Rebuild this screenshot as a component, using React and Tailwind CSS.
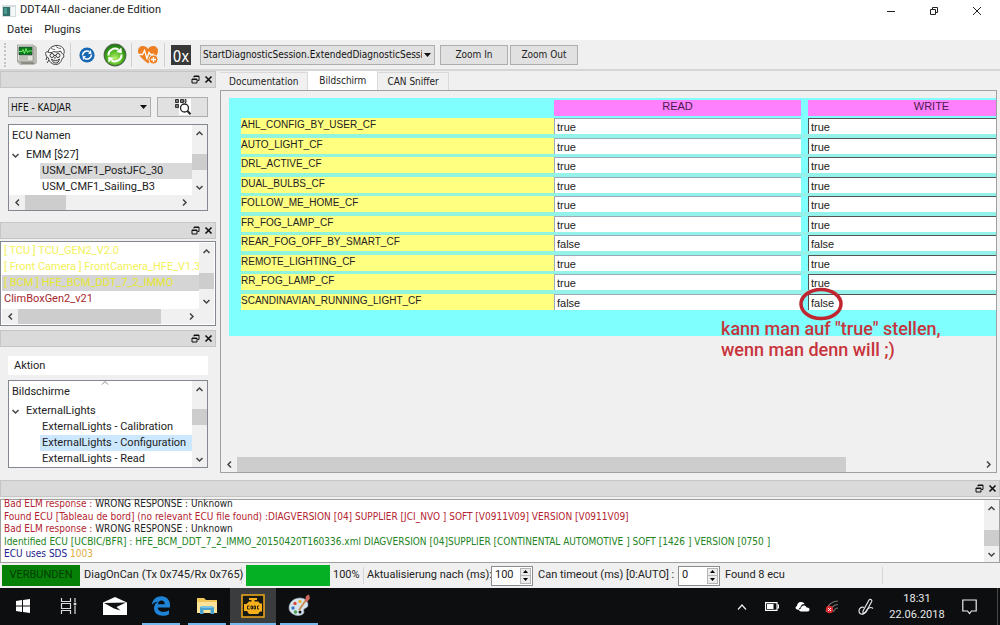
import { useState } from "react";
import clsx from "clsx";

const PARAMS = [
  { name: "AHL_CONFIG_BY_USER_CF", value: "true" },
  { name: "AUTO_LIGHT_CF", value: "true" },
  { name: "DRL_ACTIVE_CF", value: "true" },
  { name: "DUAL_BULBS_CF", value: "true" },
  { name: "FOLLOW_ME_HOME_CF", value: "true" },
  { name: "FR_FOG_LAMP_CF", value: "true" },
  { name: "REAR_FOG_OFF_BY_SMART_CF", value: "false" },
  { name: "REMOTE_LIGHTING_CF", value: "true" },
  { name: "RR_FOG_LAMP_CF", value: "true" },
  { name: "SCANDINAVIAN_RUNNING_LIGHT_CF", value: "false" },
];

const TABS = ["Documentation", "Bildschirm", "CAN Sniffer"];

const chevrons = {
  up: "M1.5 6 4.5 3l3 3",
  down: "M1.5 3l3 3 3-3",
  left: "M6 1.5l-3 3 3 3",
  right: "M3 1.5l3 3-3 3",
};

const Chevron = ({ dir, className }) => (
  <svg viewBox="0 0 9 9" className={clsx("size-[9px] shrink-0", className)} fill="none" stroke="#444" strokeWidth="1.5">
    <path d={chevrons[dir]} />
  </svg>
);

const VScroll = ({ thumb }) => (
  <div className="flex w-[15px] shrink-0 flex-col bg-[#f0f0f0]">
    <button aria-label="Nach oben" className="flex h-4 items-center justify-center">
      <Chevron dir="up" />
    </button>
    <div className="flex-1">
      <div className={clsx("bg-[#cdcdcd]", thumb)} />
    </div>
    <button aria-label="Nach unten" className="flex h-4 items-center justify-center">
      <Chevron dir="down" />
    </button>
  </div>
);

const HScroll = ({ thumb }) => (
  <div className="flex h-[15px] shrink-0 bg-[#f0f0f0]">
    <button aria-label="Nach links" className="flex w-4 items-center justify-center">
      <Chevron dir="left" />
    </button>
    <div className="flex flex-1">
      <div className={clsx("bg-[#cdcdcd]", thumb)} />
    </div>
    <button aria-label="Nach rechts" className="flex w-4 items-center justify-center">
      <Chevron dir="right" />
    </button>
  </div>
);

const DockTitle = () => (
  <div className="flex h-[17px] shrink-0 items-center justify-end gap-1 border border-[#c6c6c6] bg-[#dadada] pr-[2px]">
    <button aria-label="Abdocken">
      <svg viewBox="0 0 9 9" className="size-[9px]" fill="none" stroke="#111">
        <path d="M3 2.5V1h5v4.5H6.5M3 1.5h5" />
        <path d="M1 4h5v4H1zM1 4.5h5" />
      </svg>
    </button>
    <button aria-label="Schließen">
      <svg viewBox="0 0 9 9" className="size-[9px]" fill="none" stroke="#111" strokeWidth="1.6">
        <path d="M1.5 1.5l6 6M7.5 1.5l-6 6" />
      </svg>
    </button>
  </div>
);

const Select = ({ label, value, className }) => (
  <div className={clsx("relative flex h-5", className)}>
    <select
      aria-label={label}
      className="w-full appearance-none border border-[#adadad] bg-[#e1e1e1] pr-3 pl-[2px] font-['DejaVu_Sans_Condensed'] text-[10px] text-[#111]"
    >
      <option>{value}</option>
    </select>
    <svg viewBox="0 0 7 4" className="pointer-events-none absolute top-2 right-1 h-1 w-[7px]">
      <path d="M0 0h7L3.5 4z" fill="#111" />
    </svg>
  </div>
);

const SpinBox = ({ id, value }) => (
  <div className="flex h-5 w-[42px] border border-[#8c8c8c] bg-white">
    <input id={id} defaultValue={value} className="w-0 flex-1 px-[3px] outline-none" />
    <div className="m-px flex w-[11px] flex-col border border-[#b5b5b5] bg-[#ececec]">
      <button aria-label="Erhöhen" className="flex flex-1 items-center justify-center border-b border-[#b5b5b5]">
        <svg viewBox="0 0 5 3" className="h-[3px] w-[5px]">
          <path d="M0 3h5L2.5 0z" />
        </svg>
      </button>
      <button aria-label="Verringern" className="flex flex-1 items-center justify-center">
        <svg viewBox="0 0 5 3" className="h-[3px] w-[5px]">
          <path d="M0 0h5L2.5 3z" />
        </svg>
      </button>
    </div>
  </div>
);

const Tree = ({ header, parent, items, selected, selectedClass, sortMark, thumb, hThumb }) => (
  <div className="border border-[#828790] bg-white">
    <div className="flex">
      <div className="min-w-0 flex-1 text-[11px] leading-4">
        <div className="relative flex h-[22px] items-center pl-[3px]">
          {header}
          {sortMark && (
            <svg viewBox="0 0 8 4" className="absolute top-0 left-1/2 h-1 w-2" fill="none" stroke="#888">
              <path d="M1 3.5l3-3 3 3" />
            </svg>
          )}
        </div>
        <div className="flex h-4 items-center gap-[6px] pl-[2px]">
          <Chevron dir="down" />
          {parent}
        </div>
        <ul>
          {items.map((item) => (
            <li key={item} className={clsx("ml-[31px] h-4 pl-[2px] whitespace-nowrap", item === selected && selectedClass)}>
              {item}
            </li>
          ))}
        </ul>
      </div>
      <VScroll thumb={thumb} />
    </div>
    {hThumb && (
      <div className="bg-[#f0f0f0] pr-[15px]">
        <HScroll thumb={hThumb} />
      </div>
    )}
  </div>
);

const TitleBar = () => (
  <header className="bg-white text-[11px] text-[#222]">
    <div className="flex h-[21px] items-center">
      <svg viewBox="0 0 14 12" className="ml-[2px] h-3 w-[14px]">
        <path d="M0 0h14v12H0z" fill="#d5dcdc" />
        <path d="M1 2h7v9H1z" fill="#2f6f6c" />
        <path d="M2 3h3v6H2z" fill="#4a9a8a" />
        <path d="M9 2h4v9H9z" fill="#f4f7f7" />
      </svg>
      <h1 className="ml-1">DDT4All - dacianer.de Edition</h1>
      <div className="ml-auto flex pr-[2px]">
        <button aria-label="Minimieren" className="flex w-[43px] justify-center">
          <svg viewBox="0 0 10 10" className="size-[10px]" stroke="#222">
            <path d="M1 5.500h8" />
          </svg>
        </button>
        <button aria-label="Wiederherstellen" className="flex w-[43px] justify-center">
          <svg viewBox="0 0 10 10" className="size-[10px]" fill="none" stroke="#222">
            <path d="M1.500 3.500h5v5h-5zM3.500 3V1.500h5v5H7" />
          </svg>
        </button>
        <button aria-label="Schließen" className="flex w-[43px] justify-center">
          <svg viewBox="0 0 10 10" className="size-[10px]" stroke="#222">
            <path d="M1 1l8 8M9 1L1 9" />
          </svg>
        </button>
      </div>
    </div>
    <nav className="flex h-[19px] items-center gap-3 pl-[7px]">
      <button>Datei</button>
      <button>Plugins</button>
    </nav>
  </header>
);

const ToolSeparator = () => <div className="h-6 w-px bg-[#d0d0d0]" />;

const Toolbar = () => (
  <div className="flex h-[31px] items-center border-b-2 border-[#d6d6d6] pl-1">
    <div className="h-6 border-l-2 border-dotted border-[#c4c4c4]" />
    <button aria-label="Diagnose" className="ml-[10px]">
      <svg viewBox="0 0 22 22" className="size-[22px]">
        <path d="M3 1h15l3 2v16l-3 2H4l-3-3V3z" fill="#b9bab2" />
        <path d="M1.500 1h15.500v16H1.500z" fill="#e3e4dc" stroke="#8b8c85" strokeWidth=".7" />
        <path d="M3 3h13v8H3z" fill="#0e7a1e" stroke="#234" strokeWidth=".6" />
        <path d="M3 7.500h3l1-2 1.500 4 1.500-5 1.500 4 1-1.500h3.500" fill="none" stroke="#7dff70" strokeWidth=".9" />
        <path d="M3 13h9M3 15h9" stroke="#9a9b93" />
        <path d="M4 18h13l2 2H6z" fill="#8b8c85" />
      </svg>
    </button>
    <button aria-label="Experte" className="ml-[6px]">
      <svg viewBox="0 0 22 22" className="size-[22px]" fill="none" stroke="#3c3c3c" strokeWidth="1">
        <path d="M4 8c-2-1-3 1-2 3 0 2 2 2 2.500 3 .5 4 4 6.500 7 6.500 4 0 6-3 6.500-6 1.500-.5 2.500-2 1.500-4" fill="#f7f7f7" />
        <path d="M4 8c1-4 4-6 8-6.500 3-.4 7 1 8 4.500.5 2 0 3.500-.5 4.500-1.500-.5-2-2-3-3.500-2 1.500-5 1-7 .5C8 9 6 9 4 8z" fill="#fff" />
        <path d="M7 4c1 1 2 1.500 4 1.500M12 2.500c1 1 3 2 5 2" strokeWidth=".8" />
        <path d="M6 11.500a2 2 0 1 0 4 0 2 2 0 1 0-4 0zM12 11.500a2 2 0 1 0 4 0 2 2 0 1 0-4 0zM10 11.500h2" />
        <path d="M7.500 15c2 2 6 2 8 0-.5 3-2 4-4 4s-3.500-2-4-4z" fill="#ddd" />
        <path d="M10 13.500l1 .8 1-.8M5 16l-2 3M3 13l-1 3" />
      </svg>
    </button>
    <div className="ml-1 flex">
      <ToolSeparator />
    </div>
    <button aria-label="Aktualisieren" className="ml-2">
      <svg viewBox="0 0 16 16" className="size-4">
        <circle cx="8" cy="8" r="7.600" fill="#1668b5" />
        <path d="M3.500 8.500A4.500 4.500 0 0 1 10.500 4.700M12.500 7.500A4.500 4.500 0 0 1 5.500 11.300" fill="none" stroke="#fff" strokeWidth="1.500" />
        <path d="M9 6.700l3.500.3-.6-4zM7 9.300L3.500 9l.6 4z" fill="#fff" />
      </svg>
    </button>
    <button aria-label="Neu laden" className="ml-2">
      <svg viewBox="0 0 24 24" className="size-6">
        <defs>
          <radialGradient id="green" cx=".5" cy=".65" r=".6">
            <stop offset="0" stopColor="#b8f06a" />
            <stop offset=".6" stopColor="#4cb51e" />
            <stop offset="1" stopColor="#1c7a10" />
          </radialGradient>
        </defs>
        <circle cx="12" cy="12" r="10.800" fill="url(#green)" stroke="#4b6b45" strokeWidth="1.200" />
        <path d="M5.500 12.500a6.500 6.500 0 0 1 10-5.800M18.500 11.500a6.500 6.500 0 0 1-10 5.800" fill="none" stroke="#fff" strokeWidth="2" />
        <path d="M18.500 4.500l.3 5.800-5.600-1.300zM5.500 19.500l-.3-5.800 5.600 1.300z" fill="#fff" />
      </svg>
    </button>
    <div className="ml-1 flex">
      <ToolSeparator />
    </div>
    <button aria-label="Live-Werte" className="ml-[5px]">
      <svg viewBox="0 0 22 20" className="h-5 w-[22px]">
        <path d="M11 18.500C5 13.500 1 10 1 6c0-3 2-5 5-5 2 0 4 1 5 3 1-2 3-3 5-3 3 0 5 2 5 5 0 4-4 7.500-10 12.500z" fill="#ee7f22" />
        <path d="M1 9.500h4.500l2-4 2.500 8 2-6 1.500 2H17" fill="none" stroke="#fff" strokeWidth="1.300" />
        <circle cx="16.500" cy="14.500" r="4.500" fill="#ee7f22" stroke="#f5f0ea" />
        <path d="M14 14.500h5M16.500 12v5" stroke="#fff" strokeWidth="1.300" />
      </svg>
    </button>
    <div className="ml-[5px] flex">
      <ToolSeparator />
    </div>
    <button
      aria-label="Hexadezimal"
      className="ml-[6px] flex size-5 items-center justify-center overflow-hidden bg-[#383838] pt-1 font-['DejaVu_Sans_Condensed'] text-[15px] leading-4 text-white"
    >
      0x
    </button>
    <Select
      label="Diagnosesitzung"
      value="StartDiagnosticSession.ExtendedDiagnosticSession"
      className="ml-[9px] w-[235px]"
    />
    <div className="ml-[5px] flex gap-[2px] font-['DejaVu_Sans_Condensed'] text-[10px]">
      <button className="h-5 w-[68px] border border-[#adadad] bg-[#e1e1e1]">Zoom In</button>
      <button className="h-5 w-[68px] border border-[#adadad] bg-[#e1e1e1]">Zoom Out</button>
    </div>
  </div>
);

const ECUS = [
  { name: "[ TCU ] TCU_GEN2_V2.0", className: "text-[#f2f25a]" },
  { name: "[ Front Camera ] FrontCamera_HFE_V1.3", className: "text-[#f2f25a]" },
  { name: "[ BCM ] HFE_BCM_DDT_7_2_IMMO", className: "bg-[#d5d5d5] text-[#e6e62e]" },
  { name: "ClimBoxGen2_v21", className: "text-[#a8282e]" },
];

const Sidebar = () => (
  <aside className="flex w-[216px] shrink-0 flex-col">
    <DockTitle />
    <div className="flex flex-col gap-[7px] px-2 pt-[9px] pb-[11px]">
      <div className="flex items-center gap-[6px]">
        <Select label="Fahrzeug" value="HFE - KADJAR" className="w-[143px]" />
        <button aria-label="ECU suchen" className="flex h-5 flex-1 items-center justify-center border border-[#adadad] bg-[#e1e1e1]">
          <svg viewBox="0 0 16 16" className="size-4" fill="none">
            <path d="M4 0h12v16H4z" fill="#fff" />
            <path d="M.5.500h3v3h-3zM5.500.500h3v3h-3zM.5 5.500h3v3h-3z" fill="#777" stroke="#333" />
            <path d="M10 .5h1v3h-1z" stroke="#333" />
            <circle cx="9.500" cy="9" r="4" stroke="#222" strokeWidth="1.300" />
            <path d="M12.500 12l3 3.200" stroke="#222" strokeWidth="2" />
          </svg>
        </button>
      </div>
      <Tree
        header="ECU Namen"
        parent="EMM [$27]"
        items={["USM_CMF1_PostJFC_30", "USM_CMF1_Sailing_B3"]}
        selected="USM_CMF1_PostJFC_30"
        selectedClass="bg-[#d9d9d9]"
        thumb="mt-[13px] h-4"
        hThumb="w-[41px]"
      />
    </div>

    <DockTitle />
    <div className="mt-[2px] mb-1 border border-[#828790] bg-white p-px">
      <div className="flex">
        <ul className="min-w-0 flex-1 overflow-hidden pb-[2px] text-[11px] leading-4">
          {ECUS.map((ecu) => (
            <li key={ecu.name} className={clsx("h-4 pl-[2px] whitespace-nowrap", ecu.className)}>
              {ecu.name}
            </li>
          ))}
        </ul>
        <VScroll thumb="mt-[14px] h-4" />
      </div>
      <div className="bg-[#f0f0f0] pr-[15px]">
        <HScroll thumb="w-[143px]" />
      </div>
    </div>

    <DockTitle />
    <div className="flex flex-col gap-[5px] px-2 pt-[9px]">
      <div className="h-[19px] bg-white pl-[6px] text-[11px] leading-[19px]">Aktion</div>
      <Tree
        header="Bildschirme"
        parent="ExternalLights"
        items={[
          "ExternalLights - Calibration",
          "ExternalLights - Configuration",
          "ExternalLights - Read",
        ]}
        selected="ExternalLights - Configuration"
        selectedClass="bg-[#cce8ff]"
        sortMark
        thumb="mt-[12px] h-4"
      />
    </div>
  </aside>
);

const ParamTable = () => (
  <table className="w-[814px] table-fixed border-collapse text-[11px] leading-[13px] text-[#222]">
    <colgroup>
      <col className="w-[313px]" />
      <col className="w-[254px]" />
      <col className="w-[247px]" />
    </colgroup>
    <thead>
      <tr className="h-[18px] align-top text-[#4a1a4a]">
        <td />
        <th className="pr-[7px] font-normal">
          <div className="h-4 bg-[#ff80ff]">READ</div>
        </th>
        <th className="font-normal">
          <div className="h-4 bg-[#ff80ff]">WRITE</div>
        </th>
      </tr>
    </thead>
    <tbody>
      {PARAMS.map(({ name, value }) => (
        <tr key={name} className="group align-top odd:h-5 even:h-[19px]">
          <th className="bg-[#90f5dc] text-left text-[10px] font-normal group-last:bg-transparent">
            <label htmlFor={name} className="block h-4 bg-[#ffff80]">
              {name}
            </label>
          </th>
          <td className="bg-[#94f2ea] group-last:bg-transparent">
            <div className="border-r-[7px] border-[#80ffff]">
              <input
                aria-label={`${name} READ`}
                readOnly
                value={value}
                className="block h-4 w-full border-t border-l border-[#9ab] bg-white pl-[2px] outline-none"
              />
            </div>
          </td>
          <td className="bg-[#94f2ea] group-last:bg-transparent">
            <input
              id={name}
              defaultValue={value}
              className="block h-4 w-full border-t border-l border-[#555] bg-white pl-[2px] outline-none"
            />
          </td>
        </tr>
      ))}
    </tbody>
  </table>
);

const Workspace = () => {
  const [tab, setTab] = useState("Bildschirm");

  return (
    <main className="flex min-w-0 flex-1 flex-col pr-[3px] pb-[7px]">
      <div role="tablist" className="flex h-[19px] items-end font-['DejaVu_Sans_Condensed'] text-[10px]">
        {TABS.map((name) => (
          <button
            key={name}
            role="tab"
            aria-selected={tab === name}
            onClick={() => setTab(name)}
            className={clsx(
              "border-r border-[#d9d9d9]",
              tab === name ? "h-[19px] bg-white px-[11px]" : "h-[18px] border-t bg-[#f0f0f0] px-[9px]"
            )}
          >
            {name}
          </button>
        ))}
      </div>
      <div className="flex flex-1 flex-col border border-[#a0a0a0]">
        <div className="flex-1 overflow-hidden pt-[7px] pl-2">
          <div className="relative h-[238px] bg-[#80ffff] pt-[2px] pl-3 font-['Liberation_Sans']">
            <div className="overflow-hidden">
              <ParamTable />
            </div>
            <svg viewBox="0 0 44 34" className="absolute top-[189px] left-[570px] h-[34px] w-11" fill="none">
              <ellipse cx="22" cy="17" rx="20" ry="14.500" stroke="#c0262f" strokeWidth="3.500" />
            </svg>
            <p className="absolute top-[220px] left-[492px] font-['Roboto'] text-[18px] leading-[21px] font-medium whitespace-nowrap text-[#c8343c]">
              kann man auf "true" stellen,
              <br />
              wenn man denn will ;)
            </p>
          </div>
        </div>
        <HScroll thumb="w-[82%]" />
      </div>
    </main>
  );
};

const LogPanel = () => (
  <section>
    <DockTitle />
    <div className="mt-[2px] flex border border-[#a0a0a0] bg-white">
      <div className="-mt-[2px] flex h-16 flex-1 flex-col justify-between pb-[2px] pl-[3px] font-['DejaVu_Sans_Condensed'] text-[10px] leading-3 whitespace-nowrap text-[#222]">
        <p>
          <span className="text-[#b32430]">Bad ELM response :</span> WRONG RESPONSE : Unknown
        </p>
        <p className="text-[#b32430]">
          Found ECU [Tableau de bord] (no relevant ECU file found) :DIAGVERSION [04] SUPPLIER [JCI_NVO ] SOFT [V0911V09] VERSION [V0911V09]
        </p>
        <p>
          <span className="text-[#b32430]">Bad ELM response :</span> WRONG RESPONSE : Unknown
        </p>
        <p className="text-[#218321]">
          Identified ECU [UCBIC/BFR] : HFE_BCM_DDT_7_2_IMMO_20150420T160336.xml DIAGVERSION [04]SUPPLIER [CONTINENTAL AUTOMOTIVE ] SOFT [1426 ] VERSION [0750 ]
        </p>
        <p className="text-[#22228c]">
          ECU uses SDS <span className="text-[#e0ac3c]">1003</span>
        </p>
      </div>
      <VScroll thumb="mt-[14px] h-4" />
    </div>
  </section>
);

const StatusBar = () => (
  <div className="flex h-[25px] items-center pl-[2px] text-[11px] whitespace-nowrap text-[#222]">
    <div className="flex h-[21px] w-[78px] items-center justify-center bg-[#078007] text-[#043c04]">VERBUNDEN</div>
    <div className="w-[162px] border-r border-[#d5d5d5] pl-1">DiagOnCan (Tx 0x745/Rx 0x765)</div>
    <div className="ml-1 h-[21px] w-[84px] bg-[#06b025]" role="progressbar" aria-label="Fortschritt" aria-valuenow={100} />
    <div className="w-[34px] border-r border-[#d5d5d5] pl-[3px]">100%</div>
    <label htmlFor="refresh" className="w-[127px] pl-[3px]">
      Aktualisierung nach (ms):
    </label>
    <SpinBox id="refresh" value="100" />
    <label htmlFor="timeout" className="w-[145px] pl-[5px]">
      Can timeout (ms) [0:AUTO] :
    </label>
    <SpinBox id="timeout" value="0" />
    <div className="w-[163px] border-r border-[#d5d5d5] pl-[5px]">Found 8 ecu</div>
  </div>
);

const TaskButton = ({ label, state, children }) => (
  <button
    aria-label={label}
    className={clsx("flex w-[46px] flex-col items-center", state === "active" && "bg-[#3b3c3e]")}
  >
    <span className="flex flex-1 items-center">{children}</span>
    <span
      className={clsx(
        "h-[2px]",
        state === "active" && "w-full bg-[#76b9ed]",
        state === "open" && "w-[38px] bg-[#76b9ed]"
      )}
    />
  </button>
);

const Taskbar = () => (
  <footer className="flex h-[37px] bg-[#0d0e10] text-[11px] text-[#e8e8e8]">
    <TaskButton label="Start">
      <svg viewBox="0 0 14 14" className="size-[14px]" fill="#fff">
        <path d="M0 2l6-1v5.600H0zM7 .9L14 0v6.600H7zM0 7.500h6V13l-6-.9zM7 7.500h7V14l-7-1z" />
      </svg>
    </TaskButton>
    <TaskButton label="Taskansicht">
      <svg viewBox="0 0 18 16" className="h-4 w-[18px]" fill="none" stroke="#ddd" strokeWidth="1.200">
        <path d="M1.500 0v3.500h9V0M1.500 16v-3.500h9V16M1.500 5.500h9v5h-9zM15 0v4M15 8v8" />
        <path d="M13.700 4.700h2.600v2.600h-2.600z" fill="#ddd" stroke="none" />
      </svg>
    </TaskButton>
    <TaskButton label="Mail">
      <svg viewBox="0 0 24 18" className="h-[18px] w-6">
        <path d="M0 5.500L12 0l12 5.500V18H0z" fill="#fff" />
        <path d="M1 6l22-.5L13.500 10l4 3.500L11 11.500z" fill="#101113" />
      </svg>
    </TaskButton>
    <TaskButton label="Edge" state="open">
      <svg viewBox="0 0 20 20" className="size-5">
        <path
          d="M.8 9C1.500 3.500 5.500.300 10.300.300c5.500 0 8.700 4 8.700 8.700v2.500H6.800c.1 3 2.600 4.400 5.600 4.400 2.200 0 4-.6 5.600-1.600v4c-1.800 1-4 1.500-6.300 1.500-5.200 0-8.700-3-8.700-7.500 0-3 1.600-5.500 4.300-6.900C4 6 2.200 7 .8 9zm6.100-.8h6.800c0-2.400-1.200-3.700-3.200-3.700-2 0-3.300 1.400-3.600 3.700z"
          fill="#1e84d8"
        />
      </svg>
    </TaskButton>
    <TaskButton label="Explorer" state="open">
      <svg viewBox="0 0 22 18" className="h-[18px] w-[22px]">
        <path d="M1 1h7l2 2h11v13H1z" fill="#f0c75a" />
        <path d="M1 5h20v11H1z" fill="#fbe39a" />
        <path d="M4 10h14v7h-3.500v-4h-7v4H4z" fill="#4aa3cf" />
        <path d="M5 9h12v2H5z" fill="#7cc4e4" />
      </svg>
    </TaskButton>
    <TaskButton label="DDT4All" state="active">
      <svg viewBox="0 0 24 24" className="size-6">
        <path d="M1 1h22v22H1z" fill="#1a1a14" stroke="#f0a818" strokeWidth="1.500" />
        <path d="M8 4h8v2h-2.500v1.500H17l2 2h2v8h-2l-2 2.500H8l-2-3H3v-7h2.500L8 7.500h2.500V6H8z" fill="#f5b01c" />
        <path d="M8.500 12H6.500v3h2M10 12v3h1.500v-3zM13 12v3h1.500v-3zM18 12h-1.500v3H18" fill="none" stroke="#1a1a14" strokeWidth=".9" />
      </svg>
    </TaskButton>
    <TaskButton label="Paint" state="open">
      <svg viewBox="0 0 24 24" className="size-6">
        <path d="M2 14C2 8 7 4 13 4c5 0 8 3 8 7 0 3-3 3-4 4-1 2 1 3-1 5-2 1.500-5 2-8 1-4-1.500-6-4-6-7z" fill="#d6e4ee" stroke="#93a7b5" strokeWidth=".6" />
        <circle cx="6" cy="14" r="1.700" fill="#3a76c4" />
        <circle cx="8" cy="9.500" r="1.700" fill="#d84a3c" />
        <circle cx="13" cy="7.500" r="1.700" fill="#e8b23a" />
        <circle cx="8.500" cy="18" r="1.700" fill="#4aa04c" />
        <circle cx="13" cy="18" r="1.500" fill="#111" />
        <path d="M12 16l7-10" stroke="#c78a4a" strokeWidth="1.800" />
        <path d="M18 7l1-5 3-1.500 1 4L20 8z" fill="#c9685a" />
      </svg>
    </TaskButton>

    <div className="ml-auto flex items-center pr-[2px]">
      <button aria-label="Ausgeblendete Symbole" className="flex w-[30px] justify-center">
        <svg viewBox="0 0 10 6" className="h-[6px] w-[10px]" fill="none" stroke="#eee" strokeWidth="1.200">
          <path d="M1 5.500l4-4.500 4 4.500" />
        </svg>
      </button>
      <button aria-label="Akku" className="flex w-[30px] justify-center">
        <svg viewBox="0 0 14 9" className="h-[9px] w-[14px]">
          <path d="M.6.600h11.400v7.800H.6zM12 3h1.500v3H12" fill="none" stroke="#fff" strokeWidth="1.100" />
          <path d="M2 2h6.500v5H2z" fill="#fff" />
        </svg>
      </button>
      <button aria-label="OneDrive" className="flex w-[30px] justify-center">
        <svg viewBox="0 0 15 11" className="h-[11px] w-[15px]">
          <path d="M2 8.500C0 8 0 5.500 2 5c0-2.500 2-4.500 4.500-4C8 1 9 2 9.500 3c-3 0-4 2-4 3.500C4 7 3.500 8 4 9z" fill="#fff" />
          <path d="M6 10.500c-2.500 0-2.500-3 0-3 0-3.500 4.500-4 5.500-1 2-.2 3 .8 3 2s-.5 2-2 2z" fill="#fff" />
        </svg>
      </button>
      <button aria-label="WLAN" className="flex w-[30px] justify-center">
        <svg viewBox="0 0 14 14" className="size-[14px]">
          <path d="M13 1C7 1 2 5 1 12M13 4.500C9 4.500 5.500 8 5 12M13 8c-2 0-4 2-4.500 4" fill="none" stroke="#777" strokeWidth="1.100" />
          <circle cx="4.500" cy="9.500" r="3.700" fill="#dc2a2f" />
          <path d="M3 8l3 3M6 8l-3 3" stroke="#fff" />
        </svg>
      </button>
      <button aria-label="Windows Ink" className="flex w-[38px] justify-center">
        <svg viewBox="0 0 16 18" className="h-[18px] w-4" fill="none" stroke="#e5e5e5" strokeWidth="1.200">
          <path d="M5 13L11 2c1-1.500 3.500-.2 2.700 1.500L8 14l-3 2z" />
          <path d="M6 9.500c-3-1-5 1-5 3.500 0 2 1.500 3.500 4 3 3-.6 3-4.500 6-6 1.500-.8 3-.5 4 .5" />
        </svg>
      </button>
      <time className="w-16 text-center leading-4">
        18:31
        <br />
        22.06.2018
      </time>
      <button aria-label="Info-Center" className="flex w-10 justify-center">
        <svg viewBox="0 0 15 16" className="h-4 w-[15px]" fill="none" stroke="#eee" strokeWidth="1.200">
          <path d="M.8 1h13.400v11H9.500L7.500 14.500l-2-2.500H.8z" />
        </svg>
      </button>
      <div className="ml-2 h-[37px] w-px bg-[#4a4a4a]" />
    </div>
  </footer>
);

export default function App() {
  return (
    <div className="flex min-h-screen flex-col bg-[#f0f0f0] font-['Roboto'] text-[#222]">
      <TitleBar />
      <Toolbar />
      <div className="flex flex-1 gap-1">
        <Sidebar />
        <Workspace />
      </div>
      <LogPanel />
      <StatusBar />
      <Taskbar />
    </div>
  );
}
